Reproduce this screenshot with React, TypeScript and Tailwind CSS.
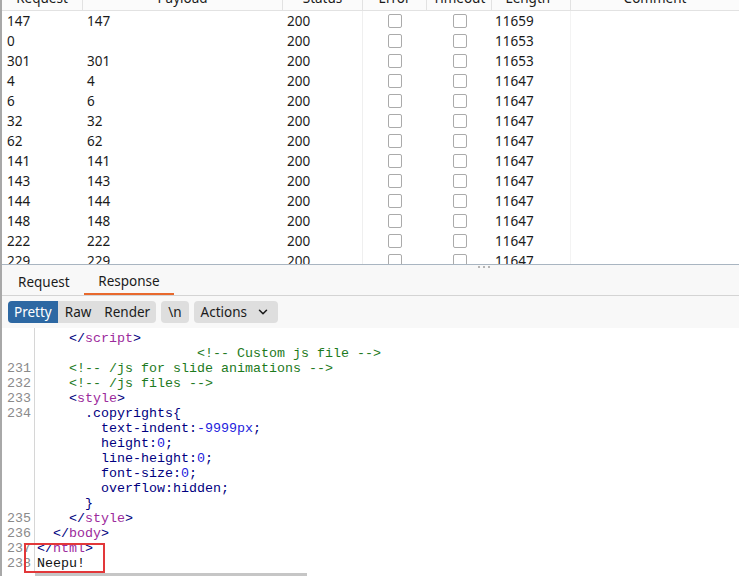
import { ChevronDown } from "lucide-react";

type Row = { req: string; payload: string; len: string };

const rows: Row[] = [
  { req: "147", payload: "147", len: "11659" },
  { req: "0", payload: "", len: "11653" },
  { req: "301", payload: "301", len: "11653" },
  { req: "4", payload: "4", len: "11647" },
  { req: "6", payload: "6", len: "11647" },
  { req: "32", payload: "32", len: "11647" },
  { req: "62", payload: "62", len: "11647" },
  { req: "141", payload: "141", len: "11647" },
  { req: "143", payload: "143", len: "11647" },
  { req: "144", payload: "144", len: "11647" },
  { req: "148", payload: "148", len: "11647" },
  { req: "222", payload: "222", len: "11647" },
  { req: "229", payload: "229", len: "11647" },
];

// token kinds -> colours
const C: Record<string, string> = {
  p: "text-[#000080]", // punctuation / brackets
  t: "text-[#9c2a9c]", // tag name
  c: "text-[#1d7a1d]", // comment
  k: "text-[#000080]", // css property / selector
  n: "text-[#2222dd]", // css number
  x: "text-[#111111]", // plain
};

type Tok = [string, string];
type Line = { no?: string; toks: Tok[] };

const lines: Line[] = [
  { toks: [["x", "    "], ["p", "</"], ["t", "script"], ["p", ">"]] },
  { toks: [["x", "                    "], ["c", "<!-- Custom js file -->"]] },
  { no: "231", toks: [["x", "    "], ["c", "<!-- /js for slide animations -->"]] },
  { no: "232", toks: [["x", "    "], ["c", "<!-- /js files -->"]] },
  { no: "233", toks: [["x", "    "], ["p", "<"], ["t", "style"], ["p", ">"]] },
  { no: "234", toks: [["x", "      "], ["k", ".copyrights{"]] },
  { toks: [["x", "        "], ["k", "text-indent"], ["p", ":"], ["n", "-9999px"], ["p", ";"]] },
  { toks: [["x", "        "], ["k", "height"], ["p", ":"], ["n", "0"], ["p", ";"]] },
  { toks: [["x", "        "], ["k", "line-height"], ["p", ":"], ["n", "0"], ["p", ";"]] },
  { toks: [["x", "        "], ["k", "font-size"], ["p", ":"], ["n", "0"], ["p", ";"]] },
  { toks: [["x", "        "], ["k", "overflow"], ["p", ":"], ["k", "hidden"], ["p", ";"]] },
  { toks: [["x", "      "], ["k", "}"]] },
  { no: "235", toks: [["x", "    "], ["p", "</"], ["t", "style"], ["p", ">"]] },
  { no: "236", toks: [["x", "  "], ["p", "</"], ["t", "body"], ["p", ">"]] },
  { no: "237", toks: [["p", "</"], ["t", "html"], ["p", ">"]] },
  { no: "238", toks: [["x", "Neepu!"]] },
];

function Check() {
  return <span className="block w-[14px] h-[14px] rounded-[2px] border border-[#ababab] bg-white" />;
}

export default function App() {
  return (
    <div className="w-[739px] h-[576px] overflow-hidden bg-white flex border-l-2 border-[#a8a8a8] font-['Noto_Sans',sans-serif] text-[13.5px] text-[#1b1b1b]">
      <div className="flex-1 flex flex-col min-w-0">
        {/* Results table */}
        <div className="h-[264px] overflow-hidden shrink-0">
          <div className="mt-[-14px] h-[25px] flex items-center border-b border-[#e2e2e2] bg-[#fbfbfb]">
            <div className="w-[81px] h-full flex items-center justify-center border-r border-[#e2e2e2]">Request</div>
            <div className="w-[200px] h-full flex items-center justify-center border-r border-[#e2e2e2]">Payload</div>
            <div className="w-[80px] h-full flex items-center justify-center border-r border-[#e2e2e2]">Status</div>
            <div className="w-[64px] h-full flex items-center justify-center border-r border-[#e2e2e2]">Error</div>
            <div className="w-[65px] h-full flex items-center justify-center border-r border-[#e2e2e2]">Timeout</div>
            <div className="w-[79px] h-full flex items-center justify-center gap-1 border-r border-[#e2e2e2]">
              Length <span className="text-[8px] text-[#999]">˅</span>
            </div>
            <div className="flex-1 h-full flex items-center justify-center">Comment</div>
          </div>
          {rows.map((r, i) => (
            <div key={i} className="h-[20px] flex items-center">
              <div className="w-[81px] h-full flex items-center pl-[5px]">{r.req}</div>
              <div className="w-[200px] h-full flex items-center pl-[4px]">{r.payload}</div>
              <div className="w-[80px] h-full flex items-center pl-[4px] border-r border-[#efefef]">200</div>
              <div className="w-[64px] h-full flex items-center justify-center"><Check /></div>
              <div className="w-[65px] h-full flex items-center justify-center"><Check /></div>
              <div className="w-[79px] h-full flex items-center pl-[3px] border-r border-[#f3f3f3]">{r.len}</div>
              <div className="flex-1" />
            </div>
          ))}
        </div>

        {/* Splitter */}
        <div className="relative h-px bg-[#a9b5c1] shrink-0">
          <div className="absolute left-[476px] top-[2px] flex gap-[3px]">
            <span className="w-[2px] h-[2px] bg-[#b5b5b5]" />
            <span className="w-[2px] h-[2px] bg-[#b5b5b5]" />
            <span className="w-[2px] h-[2px] bg-[#b5b5b5]" />
          </div>
        </div>

        {/* Tabs */}
        <div className="h-[30px] flex items-end bg-[#f8f8f8] shrink-0">
          <div className="h-full w-[82px] flex items-center pt-[4px] pl-[16px]">Request</div>
          <div className="h-full w-[90px] flex items-center justify-center pt-[4px] border-b-2 border-[#e8692d]">Response</div>
        </div>
        <div className="h-px bg-[#d4d4d4] shrink-0" />

        {/* Toolbar */}
        <div className="h-[32px] bg-[#f8f8f8] flex items-start pt-[5px] pl-[6px] gap-[5px] shrink-0">
          <div className="flex h-[22px] rounded-[4px] bg-[#dedede] overflow-hidden">
            <span className="px-[6px] flex items-center bg-[#2d68a3] text-white">Pretty</span>
            <span className="px-[7px] flex items-center">Raw</span>
            <span className="px-[6px] flex items-center">Render</span>
          </div>
          <span className="h-[22px] px-[7px] flex items-center rounded-[4px] bg-[#dedede]">\n</span>
          <span className="h-[22px] pl-[7px] pr-[8px] flex items-center gap-[9px] rounded-[4px] bg-[#dedede]">
            Actions <ChevronDown size={14} strokeWidth={2.6} />
          </span>
        </div>

        {/* Code view */}
        <div className="relative flex-1 overflow-hidden bg-white">
          <div className="flex h-[3px]">
            <div className="w-[33px] shrink-0 border-r border-[#d6d6d6]" />
          </div>
          <div className="font-['Liberation_Mono','Courier_New',monospace] text-[13.33px] leading-[15px]">
            {lines.map((l, i) => (
              <div key={i} className="flex h-[15px]">
                <div className="w-[33px] shrink-0 pl-[5px] border-r border-[#d6d6d6] text-[#8a8a8a]">{l.no ?? ""}</div>
                <div className="pl-[2px] whitespace-pre">
                  {l.toks.map(([k, s], j) => (
                    <span key={j} className={C[k]}>{s}</span>
                  ))}
                </div>
              </div>
            ))}
          </div>
          <div className="absolute left-[22px] top-[215px] w-[81px] h-[30px] border-2 border-[#e2383a]" />
          <div className="absolute left-[33px] bottom-0 w-[272px] h-[3px] bg-[#c6c6c6]" />
        </div>
      </div>
    </div>
  );
}
